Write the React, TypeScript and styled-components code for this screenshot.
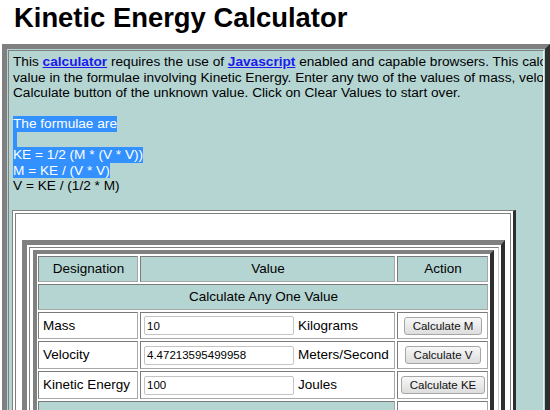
import { useState } from "react";
import styled, { createGlobalStyle } from "styled-components";

const TEAL = "#b5d5d3";
const GREY = "#808080";
const DARK = "#2e2e2e";

const GlobalStyle = createGlobalStyle`
  html, body {
    margin: 0;
    padding: 0;
    overflow: hidden;
    background: #fff;
  }
  body {
    font-family: "Liberation Sans", Arial, sans-serif;
    color: #000;
  }
`;

const Page = styled.div`
  padding-top: 2px;
`;

const Title = styled.h1`
  margin: 0 0 0 14px;
  font-size: 27.4px;
  line-height: 32px;
  font-weight: bold;
`;

const OuterFrame = styled.div`
  margin: 10px 0 0 2px;
  width: 548px;
  box-sizing: border-box;
  border-style: solid;
  border-width: 5px;
  border-color: ${GREY} ${DARK} ${DARK} ${GREY};
  padding: 1px;
  background: ${TEAL};
`;

const OuterCell = styled.div`
  border: 1px solid;
  border-color: ${GREY} #e8f0f0 #e8f0f0 ${GREY};
  background: ${TEAL};
  padding: 3px 4px 40px 4px;
  overflow: hidden;
  font-size: 13.66px;
  line-height: 15.5px;
`;

const Line = styled.div`
  white-space: nowrap;
  height: 15.5px;
`;

const Link = styled.a`
  color: #1a1aee;
  font-weight: bold;
  text-decoration: underline;
`;

const Selected = styled.span<{ $blank?: boolean }>`
  display: inline-block;
  vertical-align: top;
  height: 15.5px;
  background: #3390ff;
  color: #fff;
  width: ${(p) => (p.$blank ? "4px" : "auto")};
`;

const FrameBox = styled.div`
  margin: 1px 0 0 -1px;
  width: 504px;
  box-sizing: border-box;
  border-style: solid;
  border-width: 1px 3px 3px 1px;
  border-color: ${GREY} ${DARK} ${DARK} ${GREY};
  padding: 2px;
  background: #fff;
`;

const FrameCell = styled.div`
  border: 1px solid ${GREY};
  background: #fff;
  padding: 26px 4px 30px 6px;
`;

const InnerFrame = styled.div`
  width: 483px;
  box-sizing: border-box;
  border-style: solid;
  border-width: 5px 4px 4px 5px;
  border-color: ${GREY} ${DARK} ${DARK} ${GREY};
  padding: 2px;
  background: #fff;
`;

const InnerCell = styled.div`
  border: 1px solid;
  border-color: ${GREY} #c8c8c8 #c8c8c8 ${GREY};
  padding: 2px 5px 2px 3px;
  background: #fff;
`;

const CalcTable = styled.div`
  width: 461px;
  box-sizing: border-box;
  border-style: solid;
  border-width: 4px;
  border-color: ${GREY} ${DARK} ${DARK} ${GREY};
  padding: 2px 2px 2px 1px;
  background: #fff;
  display: grid;
  grid-template-columns: 100px 255px 91px;
  grid-template-rows: 26px 26px 27px 28px 28px 28px;
  gap: 2px;
`;

const Cell = styled.div<{ $head?: boolean; $span?: number; $align?: string }>`
  box-sizing: border-box;
  border: 1px solid;
  border-color: #7a7a7a #a8a8a8 #a8a8a8 #7a7a7a;
  background: ${(p) => (p.$head ? TEAL : "#fff")};
  grid-column: ${(p) => (p.$span ? `span ${p.$span}` : "auto")};
  display: flex;
  align-items: center;
  justify-content: ${(p) => p.$align ?? "flex-start"};
  padding: 0 3px 0 4px;
  font-size: 13.5px;
  white-space: nowrap;
`;

const ValueCell = styled(Cell)`
  padding-left: 3px;
  gap: 4px;
`;

const Field = styled.input`
  width: 150px;
  height: 19px;
  box-sizing: border-box;
  border: 1px solid #c4c4c4;
  border-radius: 2px;
  padding: 0 2px;
  font-family: "Liberation Sans", Arial, sans-serif;
  font-size: 11.5px;
  color: #000;
  outline: none;
`;

const CalcButton = styled.button`
  height: 18px;
  padding: 0 8px;
  border: 1px solid #a6a6a6;
  border-radius: 3px;
  background: linear-gradient(#f7f7f7, #dddddd);
  font-family: "Liberation Sans", Arial, sans-serif;
  font-size: 11.5px;
  color: #111;
  cursor: pointer;
`;

export default function App() {
  const [mass, setMass] = useState("10");
  const [vel, setVel] = useState("4.47213595499958");
  const [ke, setKe] = useState("100");

  const calcM = () => {
    const v = parseFloat(vel);
    setMass(String(parseFloat(ke) / (v * v)));
  };
  const calcV = () => setVel(String(Math.sqrt(parseFloat(ke) / (0.5 * parseFloat(mass)))));
  const calcKE = () => {
    const v = parseFloat(vel);
    setKe(String(0.5 * (parseFloat(mass) * (v * v))));
  };

  return (
    <>
      <GlobalStyle />
      <Page>
        <Title>Kinetic Energy Calculator</Title>
        <OuterFrame>
          <OuterCell>
            <Line>
              This <Link href="#">calculator</Link> requires the use of <Link href="#">Javascript</Link> enabled
              and capable browsers. This calculator computes the unknown
            </Line>
            <Line>
              value in the formulae involving Kinetic Energy. Enter any two of the values of mass, velocity or
              kinetic energy and click on the
            </Line>
            <Line>Calculate button of the unknown value. Click on Clear Values to start over.</Line>
            <Line />
            <Line>
              <Selected>The formulae are</Selected>
            </Line>
            <Line>
              <Selected $blank />
            </Line>
            <Line>
              <Selected>KE = 1/2 (M * (V * V))</Selected>
            </Line>
            <Line>
              <Selected>M = KE / (V * V)</Selected>
            </Line>
            <Line>V = KE / (1/2 * M)</Line>
            <Line />
            <FrameBox>
              <FrameCell>
                <InnerFrame>
                  <InnerCell>
                    <CalcTable>
                      <Cell $head $align="center">Designation</Cell>
                      <Cell $head $align="center">Value</Cell>
                      <Cell $head $align="center">Action</Cell>

                      <Cell $head $span={3} $align="center">Calculate Any One Value</Cell>

                      <Cell>Mass</Cell>
                      <ValueCell>
                        <Field value={mass} onChange={(e) => setMass(e.target.value)} />
                        Kilograms
                      </ValueCell>
                      <Cell $align="center">
                        <CalcButton onClick={calcM}>Calculate M</CalcButton>
                      </Cell>

                      <Cell>Velocity</Cell>
                      <ValueCell>
                        <Field value={vel} onChange={(e) => setVel(e.target.value)} />
                        Meters/Second
                      </ValueCell>
                      <Cell $align="center">
                        <CalcButton onClick={calcV}>Calculate V</CalcButton>
                      </Cell>

                      <Cell>Kinetic Energy</Cell>
                      <ValueCell>
                        <Field value={ke} onChange={(e) => setKe(e.target.value)} />
                        Joules
                      </ValueCell>
                      <Cell $align="center">
                        <CalcButton onClick={calcKE}>Calculate KE</CalcButton>
                      </Cell>

                      <Cell $head $span={2} />
                      <Cell />
                    </CalcTable>
                  </InnerCell>
                </InnerFrame>
              </FrameCell>
            </FrameBox>
          </OuterCell>
        </OuterFrame>
      </Page>
    </>
  );
}
